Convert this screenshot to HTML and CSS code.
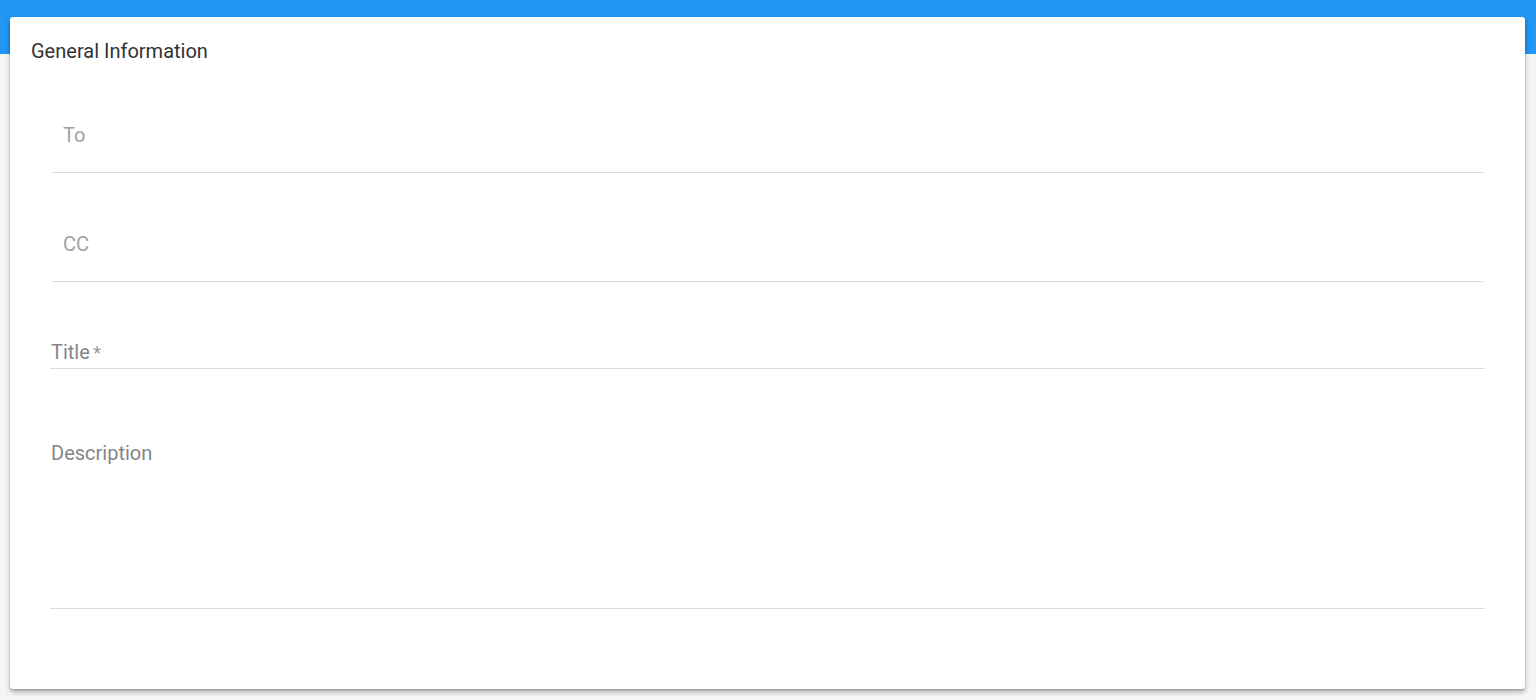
FILE: index.html
```html
<!DOCTYPE html>
<html>
<head>
<meta charset="utf-8">
<link rel="stylesheet" href="styles.css">
</head>
<body>
<div class="card">
  <h2 class="card-title">General Information</h2>
  <div class="chip-field"><span class="placeholder">To</span></div>
  <div class="chip-field"><span class="placeholder">CC</span></div>
  <div class="text-field title-field"><span class="label">Title<span class="req"> *</span></span></div>
  <div class="text-field desc-field"><span class="label">Description</span></div>
</div>
</body>
</html>
```
FILE: styles.css
```css
html, body {
  margin: 0;
  padding: 0;
}
body {
  background: linear-gradient(#2196f3 0, #2196f3 54px, #f5f5f5 54px);
  min-height: 700px;
  font-family: Roboto, "Noto Sans", sans-serif;
  padding-top: 17px;
  box-sizing: border-box;
}
.card {
  margin: 0 11px 0 10px;
  height: 672px;
  background: #fff;
  border-radius: 3px;
  box-shadow: 0 3px 5px rgba(0,0,0,0.3), 0 1px 2px rgba(0,0,0,0.15);
  padding: 21px 40px 0 40px;
  box-sizing: border-box;
}
.card-title {
  margin: 0 0 0 -19px;
  font-size: 20px;
  font-weight: 400;
  line-height: 26px;
  color: #333;
}
.chip-field {
  margin: 30px 2px 0 2px;
  height: 79px;
  box-sizing: border-box;
  padding: 3px 0 0 11px;
  border-bottom: 1px solid #dcdcdc;
  display: flex;
  align-items: center;
}
.placeholder {
  font-size: 20px;
  color: #a4a19d;
}
.text-field {
  border-bottom: 1px solid #dcdcdc;
  display: flex;
  padding-left: 1px;
}
.label {
  font-size: 20px;
  color: #858585;
}
.req {
  font-size: 18px;
  letter-spacing: -1px;
  color: #999;
}
.title-field {
  margin-top: 54px;
  height: 32px;
  align-items: center;
}
.desc-field {
  margin-top: 72px;
  height: 167px;
  align-items: flex-start;
}
```
